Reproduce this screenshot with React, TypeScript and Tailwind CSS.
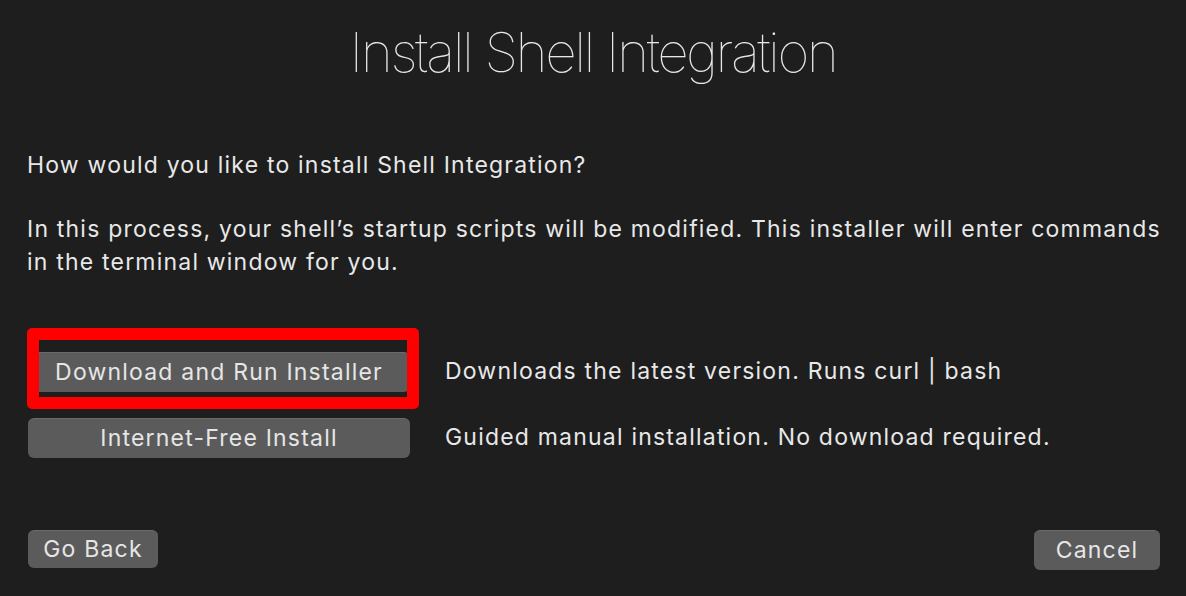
const font = { fontFamily: "Inter, 'Noto Sans', sans-serif" };

interface ButtonProps {
  label: string;
  className?: string;
}

function MacButton({ label, className }: ButtonProps) {
  return (
    <button
      className={`flex items-center justify-center rounded-[6px] bg-[#5b5b5b] border-t border-[#6a6a6a] text-[#e6e6e6] text-[23px] tracking-[1.2px] leading-none ${className}`}
    >
      {label}
    </button>
  );
}

export default function App() {
  return (
    <div
      className="w-[1186px] h-[596px] bg-[#1e1e1e] text-[#e8e8e8] flex flex-col px-[28px] overflow-hidden"
      style={font}
    >
      <h1 className="text-center text-[55px] font-thin leading-none pt-[25px] tracking-[-2.5px]">
        Install Shell Integration
      </h1>

      <div className="text-[23px] leading-[33px] tracking-[1.2px] ml-[-1px]">
        <p className="mt-[69px]">How would you like to install Shell Integration?</p>
        <p className="mt-[31px] whitespace-nowrap">
          In this process, your shell’s startup scripts will be modified. This installer will enter commands
          <br />
          in the terminal window for you.
        </p>
      </div>

      <div className="grid grid-cols-[382px_1fr] gap-x-[35px] gap-y-[26px] mt-[73px] items-center">
        <div className="relative">
          <MacButton label="Download and Run Installer" className="w-[382px] h-[40px]" />
          <div className="absolute left-[-1px] top-[-24px] w-[392px] h-[81px] rounded-[5px] border-[12px] border-[#ff0000]" />
        </div>
        <span className="text-[23px] tracking-[1.2px] mt-[-2px]">
          Downloads the latest version. Runs curl | bash
        </span>

        <MacButton label="Internet-Free Install" className="w-[382px] h-[40px]" />
        <span className="text-[23px] tracking-[1.2px] mt-[-2px]">
          Guided manual installation. No download required.
        </span>
      </div>

      <div className="mt-auto mb-[26px] flex justify-between items-start">
        <MacButton label="Go Back" className="w-[130px] h-[38px]" />
        <MacButton label="Cancel" className="w-[126px] h-[40px] mr-[-2px]" />
      </div>
    </div>
  );
}
